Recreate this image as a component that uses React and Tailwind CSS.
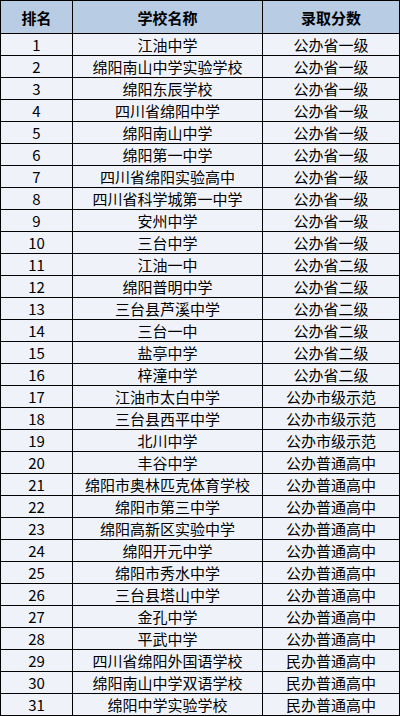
import React from 'react';

const rows = [
    ['1', '江油中学', '公办省一级'],
    ['2', '绵阳南山中学实验学校', '公办省一级'],
    ['3', '绵阳东辰学校', '公办省一级'],
    ['4', '四川省绵阳中学', '公办省一级'],
    ['5', '绵阳南山中学', '公办省一级'],
    ['6', '绵阳第一中学', '公办省一级'],
    ['7', '四川省绵阳实验高中', '公办省一级'],
    ['8', '四川省科学城第一中学', '公办省一级'],
    ['9', '安州中学', '公办省一级'],
    ['10', '三台中学', '公办省一级'],
    ['11', '江油一中', '公办省二级'],
    ['12', '绵阳普明中学', '公办省二级'],
    ['13', '三台县芦溪中学', '公办省二级'],
    ['14', '三台一中', '公办省二级'],
    ['15', '盐亭中学', '公办省二级'],
    ['16', '梓潼中学', '公办省二级'],
    ['17', '江油市太白中学', '公办市级示范'],
    ['18', '三台县西平中学', '公办市级示范'],
    ['19', '北川中学', '公办市级示范'],
    ['20', '丰谷中学', '公办普通高中'],
    ['21', '绵阳市奥林匹克体育学校', '公办普通高中'],
    ['22', '绵阳市第三中学', '公办普通高中'],
    ['23', '绵阳高新区实验中学', '公办普通高中'],
    ['24', '绵阳开元中学', '公办普通高中'],
    ['25', '绵阳市秀水中学', '公办普通高中'],
    ['26', '三台县塔山中学', '公办普通高中'],
    ['27', '金孔中学', '公办普通高中'],
    ['28', '平武中学', '公办普通高中'],
    ['29', '四川省绵阳外国语学校', '民办普通高中'],
    ['30', '绵阳南山中学双语学校', '民办普通高中'],
    ['31', '绵阳中学实验学校', '民办普通高中'],
];

function Row({ cells, header }) {
    return (
        <div className={`flex border-b border-black ${header ? 'h-[33px] bg-[#b8cce4] font-bold' : 'h-[22px] bg-[#eff3f9]'}`}>
            <div className="w-[72px] border-r border-black flex items-center justify-center">{cells[0]}</div>
            <div className="w-[190px] border-r border-black flex items-center justify-center whitespace-nowrap">{cells[1]}</div>
            <div className="flex-1 flex items-center justify-center whitespace-nowrap">{cells[2]}</div>
        </div>
    );
}

export default function App() {
    return (
        <div
            className="w-[400px] h-[716px] overflow-hidden bg-white text-black text-[15px] leading-none"
            style={{ fontFamily: '"Noto Sans CJK SC", "Liberation Sans", sans-serif' }}
        >
            <div className="border-l border-t border-r border-black">
                <Row header cells={['排名', '学校名称', '录取分数']} />
                {rows.map((r) => (
                    <Row key={r[0]} cells={r} />
                ))}
            </div>
        </div>
    );
}
